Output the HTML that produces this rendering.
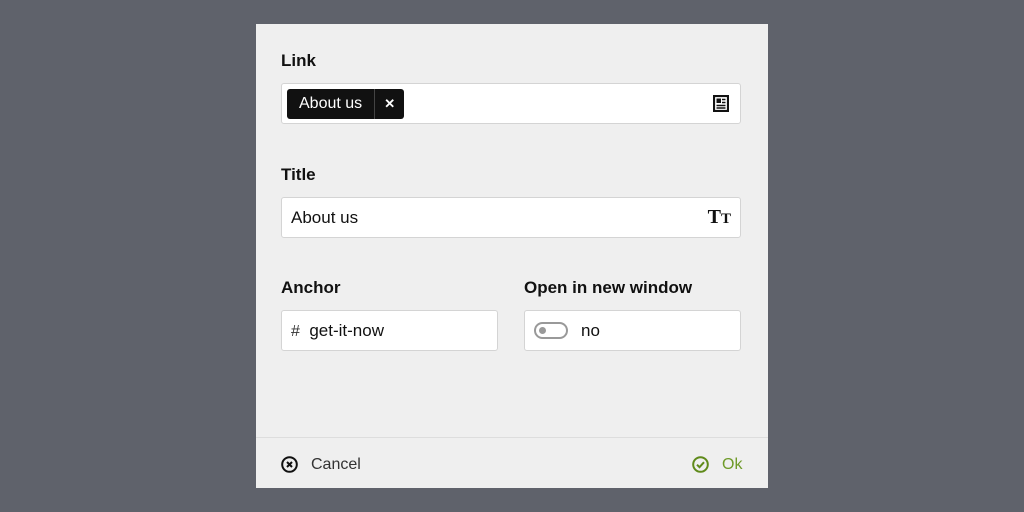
<!DOCTYPE html>
<html><head><style>
*{box-sizing:border-box;margin:0;padding:0}
body{width:1024px;height:512px;background:#5f626b;font-family:"Liberation Sans",sans-serif;position:relative;overflow:hidden;color:#111}
.d{position:absolute;left:256px;top:24px;width:512px;height:464px;background:#efefef}
.l{position:absolute;font-weight:bold;font-size:17px;line-height:20px}
.i{position:absolute;height:41px;background:#fff;border:1px solid #d4d4d4;border-radius:3px;font-size:17px;line-height:39px}
.tag{position:absolute;left:5px;top:5px;height:30px;background:#111;border-radius:3px;color:#fff;font-size:16px;line-height:30px;display:flex}
.tag span{padding:0 12px}
.tag b{border-left:1px solid #444;width:30px;text-align:center;font-size:13px}
.f{position:absolute;left:0;top:413px;width:512px;height:51px;border-top:1px solid #ddd;font-size:16px}
</style></head><body>
<div class="d">
<div class="l" style="left:25px;top:27px">Link</div>
<div class="i" style="left:25px;top:59px;width:460px">
<div class="tag"><span>About us</span><b>✕</b></div>
<svg style="position:absolute;right:11px;top:11px" width="16" height="17" viewBox="0 0 16 17"><rect x="1" y="1" width="14" height="15" fill="none" stroke="#111" stroke-width="2.2"/><rect x="3.5" y="3.5" width="4.5" height="4.5" fill="#111"/><path d="M9 4.5h3.5M9 7.5h3.5M3.5 10.5h9M3.5 13h9" stroke="#111" stroke-width="1.5"/></svg>
</div>
<div class="l" style="left:25px;top:141px">Title</div>
<div class="i" style="left:25px;top:173px;width:460px;padding-left:9px">About us
<span style="position:absolute;right:9px;top:0;font-family:'Liberation Serif',serif;font-weight:bold;font-size:20px">T<span style="font-size:15px">T</span></span></div>
<div class="l" style="left:25px;top:254px">Anchor</div>
<div class="i" style="left:25px;top:286px;width:217px;padding-left:9px"><span style="color:#333;font-size:16px">#</span>&nbsp; get-it-now</div>
<div class="l" style="left:268px;top:254px">Open in new window</div>
<div class="i" style="left:268px;top:286px;width:217px">
<div style="position:absolute;left:9px;top:11px;width:34px;height:17px;border:2px solid #999;border-radius:9px"><div style="position:absolute;left:3px;top:3px;width:7px;height:7px;border-radius:50%;background:#999"></div></div>
<span style="position:absolute;left:56px">no</span></div>
<div class="f">
<svg style="position:absolute;left:25px;top:18px" width="17" height="17" viewBox="0 0 17 17"><circle cx="8.5" cy="8.5" r="7.3" fill="none" stroke="#111" stroke-width="2"/><path d="M6 6l5 5M11 6l-5 5" stroke="#111" stroke-width="2"/></svg>
<span style="position:absolute;left:55px;top:18px;color:#333">Cancel</span>
<svg style="position:absolute;left:436px;top:18px" width="17" height="17" viewBox="0 0 17 17"><circle cx="8.5" cy="8.5" r="7.3" fill="none" stroke="#5f8a1a" stroke-width="2"/><path d="M5 8.7l2.5 2.5 4.5-5" fill="none" stroke="#5f8a1a" stroke-width="2"/></svg>
<span style="position:absolute;left:466px;top:18px;color:#6e9a28">Ok</span>
</div>
</div>
</body></html>
